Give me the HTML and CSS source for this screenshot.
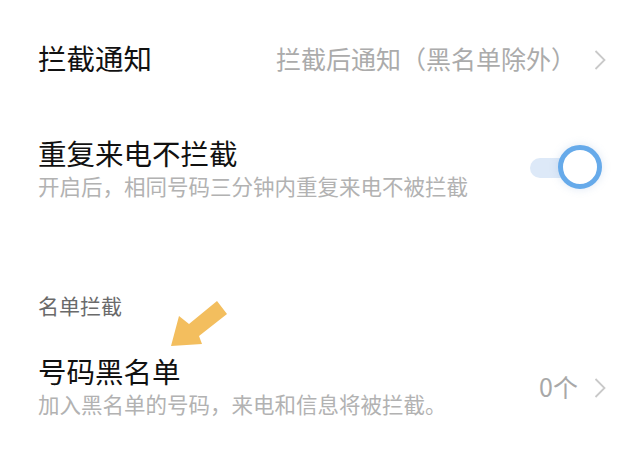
FILE: index.html
```html
<!DOCTYPE html>
<html lang="zh-CN">
<head>
    <meta charset="UTF-8">
    <meta name="viewport" content="width=device-width, initial-scale=1.0">
    <link rel="stylesheet" href="styles.css">
    <title>骚扰拦截设置</title>
</head>
<body>
    <div class="page">
        <div class="row row-notify">
            <div class="title">拦截通知</div>
            <div class="value">拦截后通知（黑名单除外）</div>
            <svg class="chevron" width="12" height="20" viewBox="0 0 12 20">
                <polyline points="1.5,1 10.5,10 1.5,19" fill="none" stroke="#c9c9c9" stroke-width="1.8"/>
            </svg>
        </div>

        <div class="row row-repeat">
            <div class="text">
                <div class="title">重复来电不拦截</div>
                <div class="desc">开启后，相同号码三分钟内重复来电不被拦截</div>
            </div>
            <div class="switch">
                <div class="track"></div>
                <div class="knob"></div>
            </div>
        </div>

        <div class="section">名单拦截</div>

        <div class="row row-black">
            <div class="text">
                <div class="title">号码黑名单</div>
                <div class="desc">加入黑名单的号码，来电和信息将被拦截。</div>
            </div>
            <div class="value count">0个</div>
            <svg class="chevron" width="12" height="20" viewBox="0 0 12 20">
                <polyline points="1.5,1 10.5,10 1.5,19" fill="none" stroke="#c9c9c9" stroke-width="1.8"/>
            </svg>
        </div>

        <!-- annotation arrow -->
        <svg class="arrow" width="70" height="60" viewBox="0 0 70 60">
            <polygon points="1,49 9,19 19,27 47,4 57,17 29,39 32,47" fill="#f3be5e"/>
        </svg>
    </div>
</body>
</html>
```

FILE: styles.css
```css
body {
    margin: 0;
    background-color: #fff;
    font-family: "Noto Sans CJK SC", "Noto Sans", sans-serif;
}

.page {
    position: relative;
    width: 640px;
    height: 451px;
    overflow: hidden;
}

.row {
    display: flex;
    align-items: center;
    padding: 0 34px 0 38px;
}

.text {
    flex: 1;
}

.title {
    font-size: 28.5px;
    line-height: 36px;
    color: #111;
}

.row-notify .title {
    flex: 1;
}

.desc {
    font-size: 21.5px;
    line-height: 30px;
    color: #b2b2b2;
}

.value {
    font-size: 25px;
    line-height: 30px;
    color: #ababab;
    margin-right: 18px;
}

.count {
    color: #a8a8a8;
    margin-right: 16px;
}

.chevron {
    display: block;
    margin-top: 4px;
}

.row-notify {
    height: 116px;
}

.row-repeat {
    height: 104px;
    padding-right: 38px;
}

.section {
    padding: 70px 0 0 38px;
    font-size: 21px;
    line-height: 30px;
    color: #6a6a6a;
}

.row-black {
    height: 132px;
}

.switch {
    position: relative;
    width: 72px;
    height: 46px;
}

.track {
    position: absolute;
    left: 0;
    top: 13px;
    width: 50px;
    height: 20px;
    border-radius: 10px;
    background-color: #dde9f8;
}

.knob {
    position: absolute;
    right: 0;
    top: 0;
    width: 34px;
    height: 34px;
    border: 5px solid #66aaea;
    border-radius: 50%;
    background-color: #fff;
    box-shadow: 0 0 8px rgba(120, 160, 210, 0.25);
}

.arrow {
    position: absolute;
    left: 170px;
    top: 297px;
}
```
